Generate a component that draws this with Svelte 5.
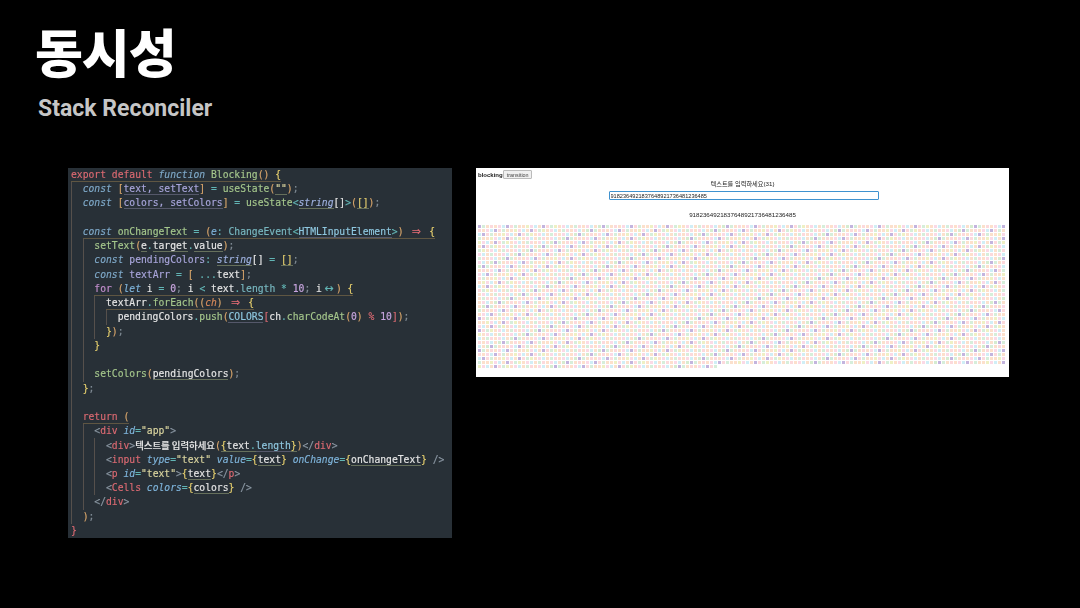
<script>
  // one line of code: guide mask (one char per 2ch column), scope underline flag, tokens
  const L = (mask, under, ...tokens) => ({ mask: mask.split(''), under, tokens });

  const code = [
    L('', true, ['r', 'export default '], ['b', 'function '], ['g', 'Blocking'], ['o', '()'], ['w', ' '], ['y', '{']),
    L('|', false, ['b', 'const '], ['o', '['], ['pu', 'text, setText'], ['o', ']'], ['t', ' = '], ['g', 'useState'], ['o', '('], ['su', '""'], ['o', ')'], ['d', ';']),
    L('|', false, ['b', 'const '], ['o', '['], ['pu', 'colors, setColors'], ['o', ']'], ['t', ' = '], ['g', 'useState'], ['t', '<'], ['bu', 'string'], ['w', '[]'], ['t', '>'], ['o', '('], ['yu', '[]'], ['o', ')'], ['d', ';']),
    L('|', false),
    L('|', true, ['b', 'const '], ['g', 'onChangeText'], ['t', ' = '], ['o', '('], ['bi', 'e'], ['t', ': '], ['c', 'ChangeEvent'], ['t', '<'], ['cu', 'HTMLInputElement'], ['t', '>'], ['o', ')'], ['w', ' '], ['lig', '⇒'], ['w', ' '], ['y', '{']),
    L('||', false, ['g', 'setText'], ['o', '('], ['wu', 'e'], ['t', '.'], ['wu', 'target'], ['t', '.'], ['wu', 'value'], ['o', ')'], ['d', ';']),
    L('||', false, ['b', 'const '], ['p', 'pendingColors'], ['t', ': '], ['bu', 'string'], ['w', '[]'], ['t', ' = '], ['yu', '[]'], ['d', ';']),
    L('||', false, ['b', 'const '], ['p', 'textArr'], ['t', ' = '], ['o', '['], ['t', ' ...'], ['w', 'text'], ['o', ']'], ['d', ';']),
    L('||', true, ['r2', 'for '], ['o', '('], ['bi', 'let '], ['w', 'i'], ['t', ' = '], ['n', '0'], ['d', '; '], ['w', 'i'], ['t', ' < '], ['w', 'text'], ['t', '.'], ['c', 'length'], ['t', ' * '], ['n', '10'], ['d', '; '], ['w', 'i'], ['lig2', '↔'], ['o', ')'], ['w', ' '], ['y', '{']),
    L('|||', true, ['w', 'textArr'], ['t', '.'], ['g', 'forEach'], ['o', '(('], ['oi', 'ch'], ['o', ')'], ['w', ' '], ['lig', '⇒'], ['w', ' '], ['y', '{']),
    L('||||', false, ['w', 'pendingColors'], ['t', '.'], ['g', 'push'], ['o', '('], ['cu', 'COLORS'], ['r', '['], ['w', 'ch'], ['t', '.'], ['g', 'charCodeAt'], ['o', '('], ['n', '0'], ['o', ')'], ['r', ' % '], ['n', '10'], ['r', ']'], ['o', ')'], ['d', ';']),
    L('|||', false, ['y', '}'], ['o', ')'], ['d', ';']),
    L('||', false, ['y', '}']),
    L('||', false),
    L('||', false, ['g', 'setColors'], ['o', '('], ['wu', 'pendingColors'], ['o', ')'], ['d', ';']),
    L('|', false, ['y', '}'], ['d', ';']),
    L('|', false),
    L('|', true, ['r', 'return '], ['o', '(']),
    L('||', false, ['t2', '<'], ['r', 'div '], ['bi', 'id'], ['t', '='], ['s', '"app"'], ['t2', '>']),
    L('|||', false, ['t2', '<'], ['r', 'div'], ['t2', '>'], ['ko', '텍스트를 입력하세요'], ['o', '('], ['yu', '{'], ['wu', 'text'], ['tu', '.'], ['cu', 'length'], ['yu', '}'], ['o', ')'], ['t2', '</'], ['r', 'div'], ['t2', '>']),
    L('|||', false, ['t2', '<'], ['r', 'input '], ['bi', 'type'], ['t', '='], ['s', '"text" '], ['bi', 'value'], ['t', '='], ['y', '{'], ['wu', 'text'], ['y', '} '], ['bi', 'onChange'], ['t', '='], ['y', '{'], ['wu', 'onChangeText'], ['y', '} '], ['t2', '/>']),
    L('|||', false, ['t2', '<'], ['r', 'p '], ['bi', 'id'], ['t', '='], ['s', '"text"'], ['t2', '>'], ['y', '{'], ['wu', 'text'], ['y', '}'], ['t2', '</'], ['r', 'p'], ['t2', '>']),
    L('|||', false, ['t2', '<'], ['r', 'Cells '], ['bi', 'colors'], ['t', '='], ['y', '{'], ['wu', 'colors'], ['y', '} '], ['t2', '/>']),
    L('||', false, ['t2', '</'], ['r', 'div'], ['t2', '>']),
    L('|', false, ['o', ')'], ['d', ';']),
    L('', false, ['r', '}'])
  ];

  const typed = '9182364921837648921736481236485';
  const COLORS = ['#fcd9dc', '#fde0cc', '#d0eef6', '#d5ecd0', '#fbd9e6', '#eef0c4', '#fbe0cc', '#c3b4de', '#eeeeee', '#d6eeda'];
  const columns = 132;
  const total = 35 * columns + 60;
  const cells = [];
  for (let i = 0; i < total; i++) {
    const row = Math.floor(i / columns);
    const index = row * 127 + (i % columns);
    cells.push(COLORS[typed.charCodeAt(index % typed.length) % 10]);
  }
</script>

<main class="slide">
  <header>
    <h1>동시성</h1>
    <h2>Stack Reconciler</h2>
  </header>

  <div class="content">
    <pre class="code">{#each code as line}<div class="line">{#each line.mask as m}<span class="col" class:guide={m === '|'}></span>{/each}<span class:under={line.under}>{#each line.tokens as tok}<span class={tok[0]}>{tok[1]}</span>{/each}</span></div>{/each}</pre>

    <section class="demo">
      <div class="bar"><b>blocking</b><button>transition</button></div>
      <div class="count">텍스트를 입력하세요(31)</div>
      <input type="text" value={typed} />
      <p>{typed}</p>
      <div class="cells">
        {#each cells as color}
          <i style:background={color}></i>
        {/each}
      </div>
    </section>
  </div>
</main>

<style>
  :global(body) {
    background: #000;
  }

  .slide {
    width: 1080px;
    height: 608px;
    overflow: hidden;
    background: #000;
    box-sizing: border-box;
    padding: 18px 0 0 36px;
  }

  h1 {
    margin: 0;
    color: #fff;
    font: 900 52px/66px "Noto Sans CJK KR", sans-serif;
    letter-spacing: -1px;
    margin-left: -1px;
  }

  h2 {
    margin: 11px 0 0 2px;
    color: #c6c6c6;
    font: 700 23px/28px Roboto, sans-serif;
  }

  .content {
    display: flex;
    align-items: flex-start;
    gap: 24px;
    margin: 45px 0 0 32px;
  }

  .code {
    box-sizing: border-box;
    width: 384px;
    height: 370px;
    margin: 0;
    padding: 0 0 0 3px;
    background: #283037;
    color: #e6e6e6;
    font: 9.7px/14.24px "DejaVu Sans Mono", monospace;
    -webkit-text-stroke: 0.15px;
    filter: blur(0.3px);
  }

  .line {
    height: 14.24px;
    white-space: pre;
  }

  .col {
    display: inline-block;
    width: 2ch;
    height: 14.24px;
    vertical-align: top;
  }

  .guide {
    box-shadow: inset 1px 0 #56504c;
  }

  .under {
    display: inline-block;
    height: 13.24px;
    border-bottom: 1px solid #5f5642;
  }

  .r { color: #dc6a72; }
  .r2 { color: #c58fd0; }
  .b { color: #7fa9c9; font-style: italic; }
  .bi { color: #7fb5dc; font-style: italic; }
  .bu { color: #9fb2e0; font-style: italic; border-bottom: 1px solid #66705c; }
  .g { color: #a5c78c; }
  .o { color: #d9a66b; }
  .oi { color: #d98a5b; font-style: italic; }
  .y { color: #e6cf6e; }
  .w { color: #e6e6e6; }
  .wu { color: #e6e6e6; border-bottom: 1px solid #66705c; }
  .p { color: #a9a6dc; }
  .pu { color: #a9a6dc; border-bottom: 1px solid #55586a; }
  .t { color: #62b5b5; }
  .t2 { color: #8b97a3; }
  .tu { color: #62b5b5; border-bottom: 1px solid #66705c; }
  .d { color: #7f8a94; }
  .c { color: #78b8c0; }
  .cu { color: #8fc8e0; border-bottom: 1px solid #55586a; }
  .n { color: #c9a6e0; }
  .s { color: #dcd6a0; }
  .su { color: #dcd6a0; border-bottom: 1px solid #66705c; }
  .yu { color: #e6cf6e; border-bottom: 1px solid #66705c; }
  .lig, .lig2 {
    display: inline-block;
    width: 2ch;
    text-align: center;
    line-height: 1;
    font-family: "DejaVu Sans", sans-serif;
    font-size: 11px;
    color: #dc6a72;
  }
  .lig2 { color: #62b5b5; }
  .ko {
    font: 500 9.4px "Noto Sans CJK KR", sans-serif;
    color: #e6e6e6;
  }

  .demo {
    width: 533px;
    height: 209px;
    background: #fff;
    color: #222;
    font-family: "Liberation Sans", "Noto Sans CJK KR", sans-serif;
    filter: blur(0.3px);
    display: flex;
    flex-direction: column;
    align-items: center;
  }

  .bar {
    align-self: flex-start;
    display: flex;
    align-items: center;
    height: 9px;
    margin: 2px 0 0 2px;
    font-size: 6px;
  }

  .bar button {
    width: 29px;
    height: 9px;
    margin-left: 0.5px;
    padding: 0;
    border: 1px solid #bbb;
    border-radius: 1px;
    background: #f0f0f0;
    color: #444;
    font: 5.4px "Liberation Sans", sans-serif;
  }

  .count {
    font-size: 6.2px;
    line-height: 9px;
  }

  input {
    box-sizing: border-box;
    width: 270px;
    height: 9px;
    margin-top: 3px;
    margin-left: 2px;
    padding: 0 1px;
    border: 1px solid #3f92cf;
    border-radius: 1px;
    outline: none;
    font: 5.6px "Liberation Sans", sans-serif;
    color: #222;
  }

  p {
    margin: 10px 0 0;
    font-size: 6.2px;
    line-height: 9px;
  }

  .cells {
    display: grid;
    grid-template-columns: repeat(132, 3px);
    grid-auto-rows: 3px;
    gap: 1px;
    margin-top: 6px;
    align-self: flex-start;
    margin-left: 2px;
  }

  .cells i {
    display: block;
  }
</style>
